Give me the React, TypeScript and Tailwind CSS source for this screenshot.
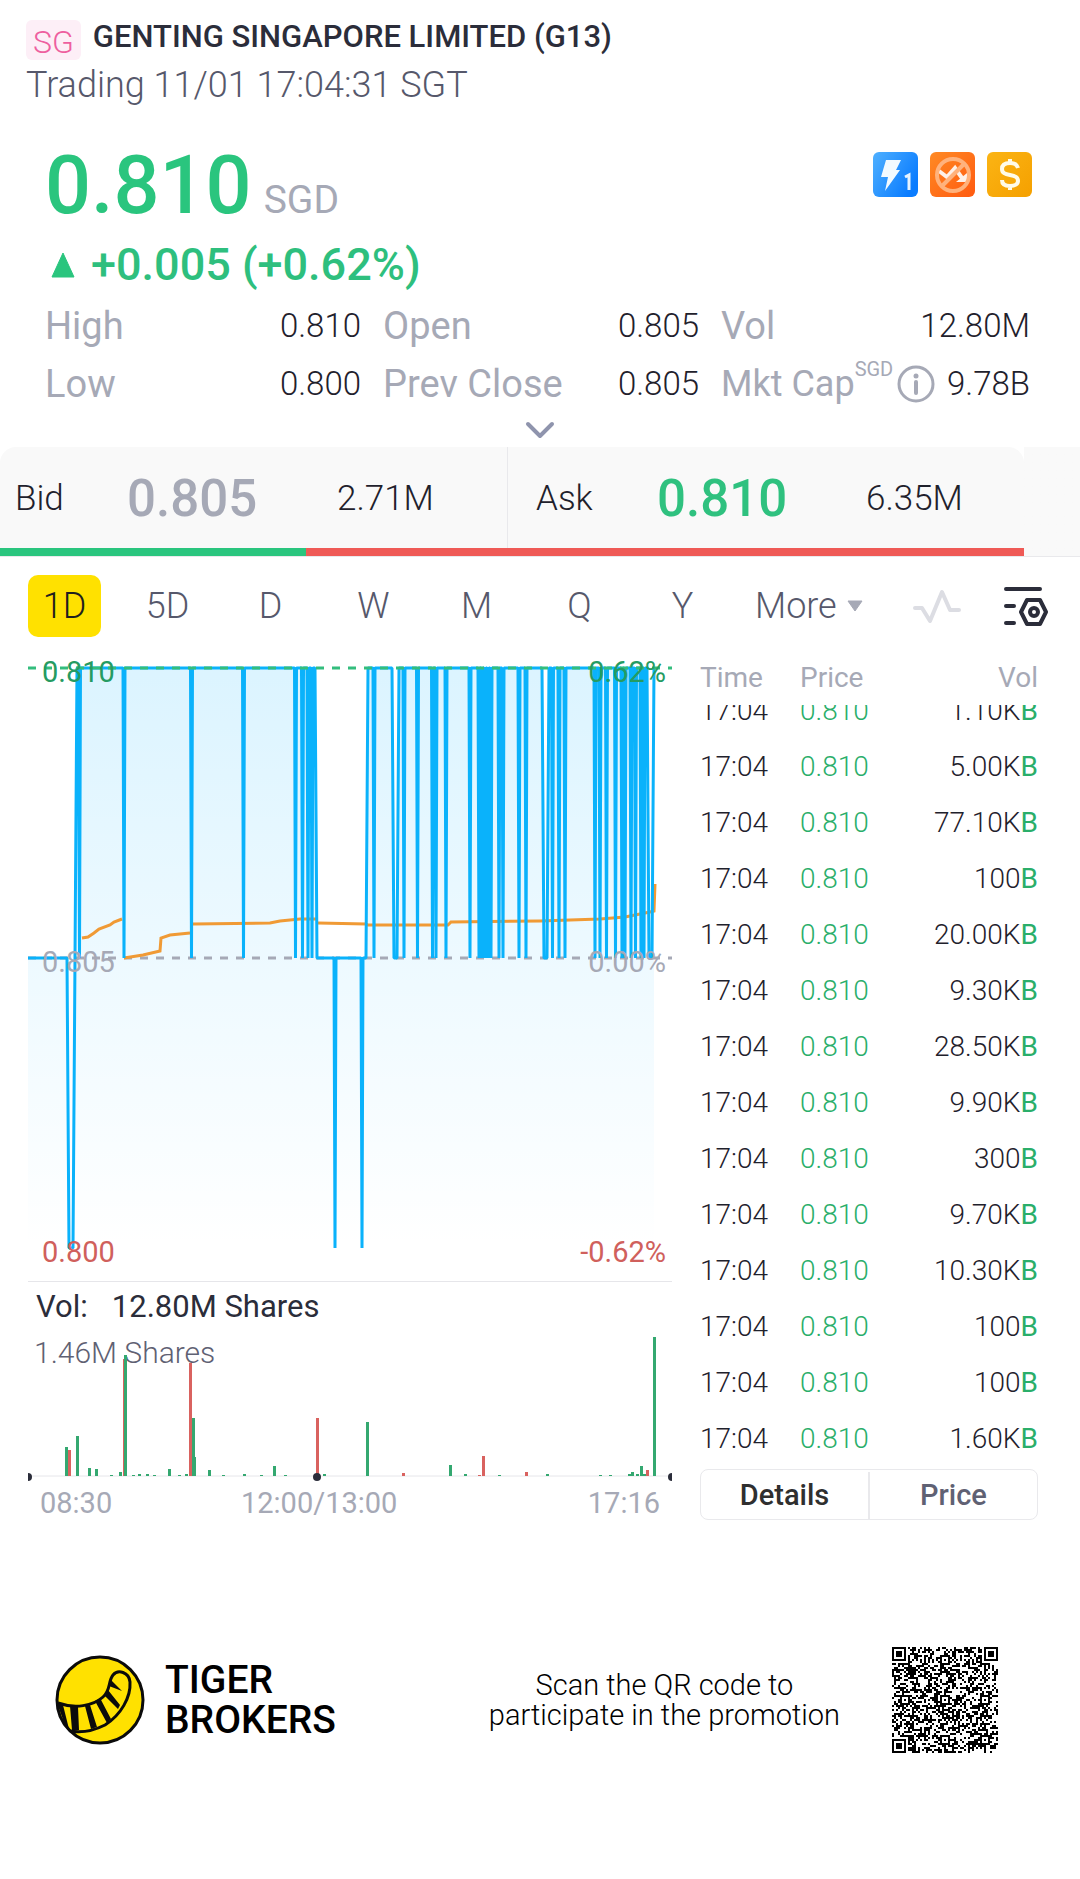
import { useState } from "react";
import { ChevronDown } from "lucide-react";

const PERIODS = ["1D", "5D", "D", "W", "M", "Q", "Y"];

const STATS = [
  { label: "High", value: "0.810" },
  { label: "Open", value: "0.805" },
  { label: "Vol", value: "12.80M" },
  { label: "Low", value: "0.800" },
  { label: "Prev Close", value: "0.805" },
  { label: "Mkt Cap", value: "9.78B", unit: "SGD" },
];

const TRADES = [
  "1.10K",
  "5.00K",
  "77.10K",
  "100",
  "20.00K",
  "9.30K",
  "28.50K",
  "9.90K",
  "300",
  "9.70K",
  "10.30K",
  "100",
  "100",
  "1.60K",
];

// Chart rows, in chart units
const TOP = 18;
const MID = 308;
const LOW = 598;

// [x where the price leaves 0.810, x where it is back]
const DIPS: [number, number][] = [
  [50, 53],
  [94, 98],
  [162, 165],
  [214, 217],
  [266, 269],
  [273, 276],
  [278, 282],
  [282, 286],
];

const LATE_DIPS: [number, number][] = [
  [344, 348],
  [364, 371],
  [374, 378],
  [387, 392],
  [403, 406],
  [406, 410],
  [416, 420],
  [440, 444],
  [449, 453],
  [452, 456],
  [455, 459],
  [458, 462],
  [461, 465],
  [469, 473],
  [473, 477],
  [489, 493],
  [496, 500],
  [514, 521],
  [522, 527],
  [529, 533],
  [535, 539],
  [565, 569],
  [570, 574],
  [576, 581],
  [585, 590],
  [592, 596],
  [595, 599],
  [601, 605],
  [606, 609],
  [611, 615],
  [614, 618],
];

function dipPath(dips: [number, number][]) {
  return dips
    .map(([from, to]) => {
      const center = (from + to) / 2;
      return to - from > 6
        ? `L${from} ${TOP}L${from + 2} ${MID}L${to - 2} ${MID}L${to} ${TOP}`
        : `L${center - 1} ${TOP}L${center} ${MID}L${center + 1} ${TOP}`;
    })
    .join("");
}

const PRICE_PATH =
  `M0 ${MID}L39 ${MID}L41 ${LOW}L45 ${LOW}L47 ${MID}L49 ${TOP}` +
  dipPath(DIPS) +
  `L287 ${TOP}L289 ${MID}L306 ${MID}L307 ${LOW}L308 ${MID}` +
  `L333 ${MID}L334 ${LOW}L335 ${MID}L338 ${MID}L340 ${TOP}` +
  dipPath(LATE_DIPS) +
  `L619 ${TOP}L621 ${MID}L624 ${MID}L626 ${TOP}`;

const AVERAGE_PATHS = [
  "M54 288L60 287L66 283L71 279L82 275L86 272L94 269",
  "M96 308L115 305L132 301L133 288L142 285L162 283",
  "M165 274L242 273L252 271L272 269L288 269",
  "M290 273L338 274L340 275L420 275L423 272L512 271L572 269L597 267L622 262L626 261L627 234",
];

// [x, height, up or down]
const VOLUMES: [number, number, "up" | "down"][] = [
  [37, 29, "up"],
  [40, 26, "down"],
  [48, 40, "up"],
  [60, 8, "up"],
  [67, 7, "up"],
  [82, 1, "up"],
  [91, 4, "up"],
  [95, 117, "down"],
  [96, 121, "up"],
  [104, 1, "up"],
  [110, 2, "up"],
  [118, 2, "up"],
  [125, 1, "up"],
  [140, 7, "up"],
  [150, 1, "up"],
  [157, 2, "up"],
  [161, 113, "down"],
  [164, 58, "up"],
  [165, 19, "up"],
  [180, 6, "up"],
  [194, 1, "up"],
  [215, 2, "up"],
  [232, 1, "up"],
  [245, 10, "up"],
  [256, 1, "up"],
  [288, 58, "down"],
  [295, 2, "up"],
  [338, 54, "up"],
  [374, 3, "down"],
  [421, 11, "up"],
  [436, 2, "up"],
  [450, 1, "down"],
  [454, 20, "down"],
  [470, 1, "up"],
  [497, 4, "down"],
  [518, 2, "up"],
  [571, 1, "up"],
  [581, 1, "up"],
  [600, 2, "up"],
  [603, 4, "up"],
  [608, 2, "up"],
  [612, 10, "up"],
  [615, 2, "up"],
  [618, 6, "down"],
  [625, 139, "up"],
];

function BoltIcon() {
  return (
    <svg viewBox="0 0 45 45" className="size-[45px]" aria-label="Level 1 quotes">
      <defs>
        <linearGradient id="bolt-bg" x1="0" y1="0" x2="1" y2="0.6">
          <stop offset="0" stopColor="#4fb0ff" />
          <stop offset="1" stopColor="#0a7cff" />
        </linearGradient>
      </defs>
      <rect width="45" height="45" rx="6" fill="url(#bolt-bg)" />
      <path d="M13 8H28L23 18H27L12 39L15 25H8Z" fill="#f2faff" />
      <path d="M32 25L36 23V38" fill="none" stroke="#e6f3ff" strokeWidth="3" />
    </svg>
  );
}

function NoShortIcon() {
  return (
    <svg viewBox="0 0 45 45" className="size-[45px]" aria-label="No short selling">
      <defs>
        <linearGradient id="short-bg" x1="0" y1="0" x2="1" y2="1">
          <stop offset="0" stopColor="#ff8a24" />
          <stop offset="1" stopColor="#ff5a10" />
        </linearGradient>
      </defs>
      <rect width="45" height="45" rx="6" fill="url(#short-bg)" />
      <path d="M9 19L17 25L25 16L32 26" fill="none" stroke="#fff1e8" strokeWidth="4" />
      <path d="M37 21V30H26Z" fill="#fff1e8" />
      <circle cx="23" cy="23" r="16" fill="none" stroke="#ffb27c" strokeWidth="4" />
      <path d="M12 34L34 12" stroke="#ffb27c" strokeWidth="4" />
    </svg>
  );
}

function DollarIcon() {
  return (
    <svg viewBox="0 0 45 45" className="size-[45px]" aria-label="Dividend">
      <defs>
        <linearGradient id="dollar-bg" x1="0" y1="0" x2="1" y2="1">
          <stop offset="0" stopColor="#fbb414" />
          <stop offset="1" stopColor="#f5a000" />
        </linearGradient>
      </defs>
      <rect width="45" height="45" rx="6" fill="url(#dollar-bg)" />
      <path
        d="M31 16C30 12 27 11 23 11C18 11 15 13 15 17C15 21 18 22 23 23C28 24 31 25 31 29C31 32 28 34 23 34C18 34 15 32 15 28M23 7V11M23 34V38"
        fill="none"
        stroke="#fffbe8"
        strokeWidth="4"
      />
    </svg>
  );
}

function InfoIcon() {
  return (
    <svg viewBox="0 0 38 38" className="size-[38px]" aria-hidden="true">
      <circle cx="19" cy="19" r="17" fill="none" stroke="#a6a9b6" strokeWidth="3" />
      <circle cx="19" cy="11" r="2.5" fill="#a6a9b6" />
      <path d="M19 17V28" stroke="#a6a9b6" strokeWidth="4" strokeLinecap="round" />
    </svg>
  );
}

function PulseIcon() {
  return (
    <svg viewBox="0 0 50 36" className="h-9 w-[50px]" aria-hidden="true">
      <path
        d="M3 20H10L18 33L30 4L38 22H47"
        fill="none"
        stroke="#dcdde3"
        strokeWidth="4"
        strokeLinecap="round"
        strokeLinejoin="round"
      />
    </svg>
  );
}

function SettingsIcon() {
  return (
    <svg viewBox="0 0 44 40" className="h-10 w-11" aria-hidden="true">
      <g fill="none" stroke="#2b2d3a" strokeWidth="4" strokeLinecap="round" strokeLinejoin="round">
        <path d="M2 3H36M2 20H10M2 37H10" />
        <path d="M23 14H36L42 26L36 38H23L17 26Z" />
        <circle cx="30" cy="26" r="4" />
      </g>
    </svg>
  );
}

function TigerLogo() {
  return (
    <svg viewBox="0 0 90 90" className="size-[90px]" aria-hidden="true">
      <circle cx="45" cy="45" r="43" fill="#ffe100" stroke="#0b0b0b" strokeWidth="3" />
      <path
        d="M3 48C20 54 38 51 48 42C56 35 53 26 58 20C63 14 74 17 75 27C76 42 66 60 50 70C38 76 25 78 15 76"
        fill="none"
        stroke="#0b0b0b"
        strokeWidth="3"
      />
      <path
        d="M2 48L8 50L14 74L10 70Z M15 51L23 52L24 75H17Z M30 51L35 50L42 72L36 74Z M40 46L45 43L56 64L52 68Z M49 40L53 35L65 50L63 54Z M54 31L56 25L67 36Z"
        fill="#0b0b0b"
      />
    </svg>
  );
}

const QR_SIZE = 53;
const QR_ALIGN = [6, 26, 46];

function qrModule(x: number, y: number, seed: number) {
  for (const [fx, fy] of [
    [0, 0],
    [QR_SIZE - 7, 0],
    [0, QR_SIZE - 7],
  ]) {
    const d = Math.max(Math.abs(x - fx - 3), Math.abs(y - fy - 3));
    if (d <= 4) return d === 3 || d <= 1;
  }
  for (const ax of QR_ALIGN) {
    for (const ay of QR_ALIGN) {
      const d = Math.max(Math.abs(x - ax), Math.abs(y - ay));
      if (d <= 2) return d !== 1;
    }
  }
  if (x === 6 || y === 6) return (x + y) % 2 === 0;
  return seed > 0.5;
}

function buildQrPath() {
  let state = 20221101;
  let path = "";
  for (let y = 0; y < QR_SIZE; y++) {
    for (let x = 0; x < QR_SIZE; x++) {
      state = (Math.imul(state, 1664525) + 1013904223) >>> 0;
      if (qrModule(x, y, state / 4294967296)) path += `M${x} ${y}h1v1h-1z`;
    }
  }
  return path;
}

const QR_PATH = buildQrPath();

function QuoteHeader() {
  return (
    <header className="pt-5 px-[26px]">
      <div className="flex items-start gap-3">
        <span className="h-10 px-[7px] rounded-md bg-[#fdeff7] text-[32px] leading-[44px] font-light text-[#ee5f9f]">
          SG
        </span>
        <h1 className="text-[31px] leading-[34px] font-medium text-[#2b2d3a]">
          GENTING SINGAPORE LIMITED (G13)
        </h1>
      </div>
      <p className="text-[36px] leading-[50px] font-light text-[#56586b]">
        Trading 11/01 17:04:31 SGT
      </p>
    </header>
  );
}

function PriceSummary() {
  return (
    <section className="pt-[34px] pl-[45px] pr-12">
      <div className="flex items-start justify-between">
        <p className="flex items-baseline gap-3">
          <span className="text-[81px] leading-[84px] font-medium text-[#2ac57e]">0.810</span>
          <span className="text-[39px] leading-none text-[#a6a9b6]">SGD</span>
        </p>
        <div className="flex gap-3 pt-2">
          <BoltIcon />
          <NoShortIcon />
          <DollarIcon />
        </div>
      </div>
      <p className="flex items-center gap-4 pt-3 pl-1.5 text-[45px] leading-[50px] font-medium text-[#2ebf7e]">
        <svg viewBox="0 0 24 26" className="h-[26px] w-6" aria-hidden="true">
          <path d="M12 1L23 25H1Z" fill="#2ac57e" stroke="#2ac57e" strokeLinejoin="round" />
        </svg>
        +0.005 (+0.62%)
      </p>
      <dl className="mr-0.5 grid grid-cols-[316fr_316fr_309fr] gap-x-[22px] pt-[7px]">
        {STATS.map((stat) => (
          <div key={stat.label} className="flex h-[58px] items-center justify-between">
            <dt
              className={
                stat.unit
                  ? "flex items-center text-[36px] whitespace-nowrap text-[#a6a9b6]"
                  : "text-[38px] whitespace-nowrap text-[#a6a9b6]"
              }
            >
              {stat.label}
              {stat.unit && (
                <>
                  <sup className="top-0 self-start text-[20px] leading-6">{stat.unit}</sup>
                  <button type="button" aria-label="About market cap" className="ml-1">
                    <InfoIcon />
                  </button>
                </>
              )}
            </dt>
            <dd className="text-[33px] font-light text-[#1f212c]">{stat.value}</dd>
          </div>
        ))}
      </dl>
    </section>
  );
}

function BidAsk() {
  return (
    <section className="border-b border-[#e9e9ec] bg-linear-to-r from-white from-50% to-[#f9f9f9] to-50%">
      <div className="mr-14 overflow-hidden">
        <div className="relative">
          <div className="absolute top-0 right-0 size-4 bg-white" />
          <div className="relative grid h-[101px] grid-cols-[508fr_516fr] rounded-t-2xl bg-[#f9f9f9] text-[35px] font-light text-[#1f212c]">
            <div className="grid grid-cols-[112px_1fr_170px] items-center border-r border-[#e9e9ec] pt-1 pl-[15px]">
              <span>Bid</span>
              <span className="text-[51px] font-medium text-[#a6a9b6]">0.805</span>
              <span>2.71M</span>
            </div>
            <div className="grid grid-cols-[121px_1fr_158px] items-center pt-1 pl-7">
              <span>Ask</span>
              <span className="text-[51px] font-medium text-[#2fc17f]">0.810</span>
              <span>6.35M</span>
            </div>
          </div>
        </div>
        <div className="flex h-2">
          <div className="bg-[#2ac57e]" style={{ width: `${(2.71 / (2.71 + 6.35)) * 100}%` }} />
          <div className="flex-1 bg-[#ef5a56]" />
        </div>
      </div>
    </section>
  );
}

function PeriodTabs() {
  const [period, setPeriod] = useState("1D");

  return (
    <nav className="flex items-center pt-[18px] pl-7 pr-8 text-[36px] font-light text-[#56586b]">
      <div className="flex gap-[30px]">
        {PERIODS.map((item) => (
          <button
            key={item}
            type="button"
            onClick={() => setPeriod(item)}
            className={
              item === period
                ? "h-[62px] w-[73px] rounded-[10px] bg-[#ffe100] text-[#1f1f1f]"
                : "h-[62px] w-[73px]"
            }
          >
            {item}
          </button>
        ))}
      </div>
      <button type="button" className="ml-9 flex items-center gap-2.5">
        More
        <svg viewBox="0 0 16 12" className="h-3 w-4" aria-hidden="true">
          <path d="M1 1H15L8 11Z" fill="#a6a9b6" stroke="#a6a9b6" strokeLinejoin="round" />
        </svg>
      </button>
      <button type="button" aria-label="Indicators" className="ml-auto">
        <PulseIcon />
      </button>
      <button type="button" aria-label="Chart settings" className="ml-[42px]">
        <SettingsIcon />
      </button>
    </nav>
  );
}

function PriceChart() {
  return (
    <svg viewBox="0 0 644 631" className="block w-full" role="img" aria-label="Intraday price">
      <defs>
        <linearGradient id="price-fill" gradientUnits="userSpaceOnUse" x1="0" y1={TOP} x2="0" y2={LOW}>
          <stop offset="0" stopColor="#00b0ff" stopOpacity="0.14" />
          <stop offset="1" stopColor="#00b0ff" stopOpacity="0" />
        </linearGradient>
      </defs>
      <path d={`${PRICE_PATH}V${LOW}H0Z`} fill="url(#price-fill)" />
      <path d={`M0 ${MID}H644`} stroke="#a6a9b6" strokeWidth="3" strokeDasharray="8 8" />
      {AVERAGE_PATHS.map((d) => (
        <path key={d} d={d} fill="none" stroke="#f09a35" strokeWidth="3" />
      ))}
      <path d={PRICE_PATH} fill="none" stroke="#0ab2fb" strokeWidth="3" strokeLinejoin="bevel" />
      <path d={`M0 ${TOP}H644`} stroke="#33bd7d" strokeWidth="3" strokeDasharray="8 8" />
      <g className="text-[29px]">
        <text x="14" y="32" fill="#259b62">0.810</text>
        <text x="638" y="32" textAnchor="end" fill="#259b62">0.62%</text>
        <text x="14" y="322" fill="#a6a9b6">0.805</text>
        <text x="638" y="322" textAnchor="end" fill="#a6a9b6">0.00%</text>
        <text x="14" y="612" fill="#d0605c">0.800</text>
        <text x="638" y="612" textAnchor="end" fill="#d0605c">-0.62%</text>
      </g>
    </svg>
  );
}

function VolumeChart() {
  return (
    <svg viewBox="0 0 644 152" className="block w-full" role="img" aria-label="Intraday volume">
      <path d="M0 146H644" stroke="#e6e6ea" strokeWidth="1" />
      <text x="6" y="33" fill="#5f6173" className="text-[30px] font-light">1.46M Shares</text>
      {VOLUMES.map(([x, height, side]) => (
        <rect
          key={x}
          x={x}
          y={146 - height}
          width="3"
          height={height}
          fill={side === "up" ? "#34a870" : "#d9625f"}
        />
      ))}
      {[0, 289, 644].map((x) => (
        <circle key={x} cx={x} cy="147" r="4" fill="#2b2d3a" />
      ))}
    </svg>
  );
}

function TradeList() {
  const [view, setView] = useState("Details");

  return (
    <div>
      <table className="w-full text-[28px] leading-[56px] font-light text-[#1f212c]">
        <thead>
          <tr className="h-[55px] text-left leading-[55px] text-[#a6a9b6]">
            <th className="w-[100px] p-0 font-normal">Time</th>
            <th className="p-0 font-normal">Price</th>
            <th className="p-0 text-right font-normal">Vol</th>
          </tr>
        </thead>
        <tbody>
          {TRADES.map((volume, i) => {
            // The list is scrolled, so the first row is cut by the header
            const cell = i === 0 ? "flex h-[34px] items-end overflow-hidden" : "flex";
            return (
              <tr key={i}>
                <td className="p-0">
                  <div className={cell}>17:04</div>
                </td>
                <td className="p-0 text-[#2aae6a]">
                  <div className={cell}>0.810</div>
                </td>
                <td className="p-0">
                  <div className={`${cell} justify-end`}>
                    {volume}
                    <span className="font-normal text-[#2aae6a]">B</span>
                  </div>
                </td>
              </tr>
            );
          })}
        </tbody>
      </table>
      <div className="mt-0.5 flex h-[51px] divide-x-2 divide-[#e9e9ec] rounded-lg border border-[#e9e9ec] pt-0.5 text-[29px] font-medium">
        {["Details", "Price"].map((item) => (
          <button
            key={item}
            type="button"
            onClick={() => setView(item)}
            className={item === view ? "flex-1 text-[#2f2f2f]" : "flex-1 text-[#5f6173]"}
          >
            {item}
          </button>
        ))}
      </div>
    </div>
  );
}

function PromoFooter() {
  return (
    <footer className="flex items-center pt-[123px] pb-[124px] pl-[55px] pr-[82px] text-black">
      <TigerLogo />
      <p className="ml-5 text-[39px] leading-10 font-medium">
        TIGER
        <br />
        BROKERS
      </p>
      <p className="ml-auto text-center text-[29px] leading-[30px] font-light">
        Scan the QR code to
        <br />
        participate in the promotion
      </p>
      <svg
        viewBox="0 0 53 53"
        className="ml-[52px] size-[106px]"
        shapeRendering="crispEdges"
        role="img"
        aria-label="Promotion QR code"
      >
        <path d={QR_PATH} fill="#000" />
      </svg>
    </footer>
  );
}

export default function App() {
  return (
    <div className="min-h-screen bg-white font-['Roboto','Liberation_Sans',sans-serif]">
      <QuoteHeader />
      <PriceSummary />
      <button type="button" aria-label="Show more" className="flex h-[34px] w-full items-center justify-center">
        <ChevronDown className="size-12 text-[#8f94ad]" strokeWidth={2} />
      </button>
      <BidAsk />
      <PeriodTabs />
      <main className="grid grid-cols-[minmax(0,1fr)_338px] gap-7 pt-[13px] pl-7 pr-[42px]">
        <div>
          <PriceChart />
          <div className="flex h-[49px] items-center gap-6 border-t border-[#e6e6ea] pt-0.5 pl-2 text-[31px] text-[#2b2d3a]">
            <span>Vol:</span>
            <span>12.80M Shares</span>
          </div>
          <VolumeChart />
          <div className="grid grid-cols-[201fr_249fr_170fr] px-3 text-[29px] leading-[42px] text-[#a6a9b6]">
            <span>08:30</span>
            <span>12:00/13:00</span>
            <span className="text-right">17:16</span>
          </div>
        </div>
        <TradeList />
      </main>
      <PromoFooter />
    </div>
  );
}
